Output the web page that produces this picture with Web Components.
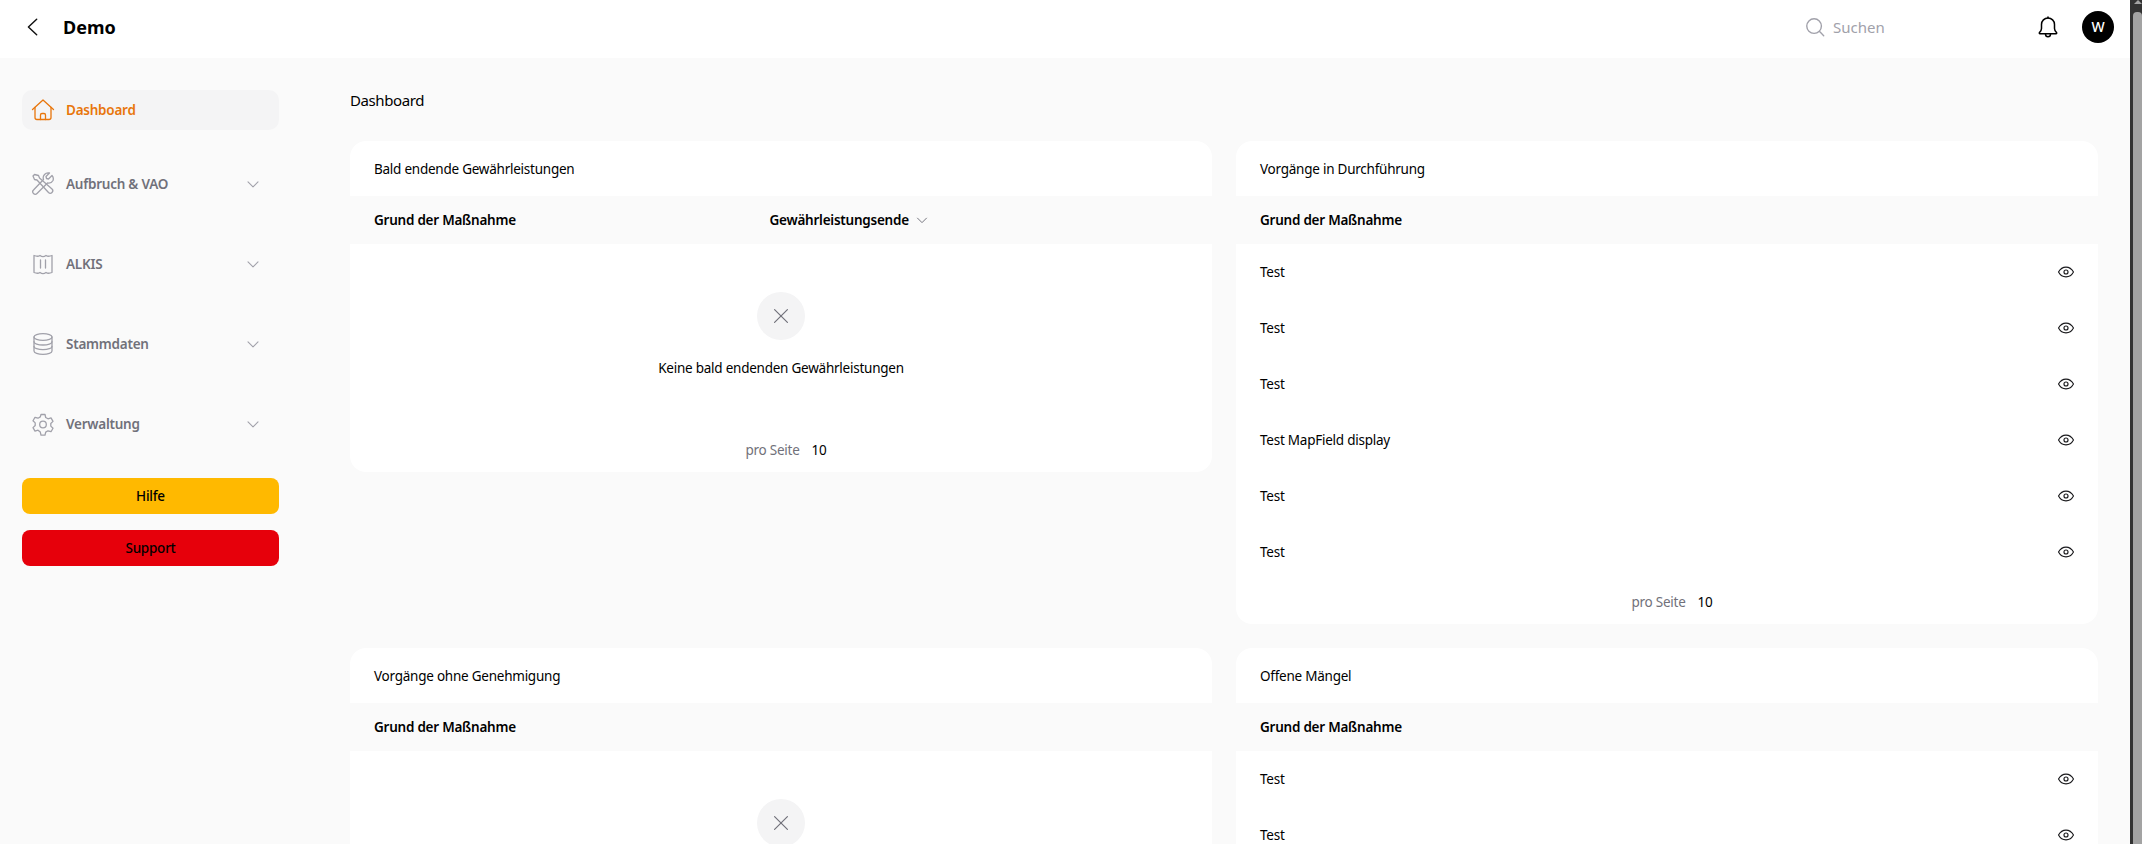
<!DOCTYPE html>
<html lang="de">
<head>
<meta charset="utf-8">
<title>Demo</title>
<style>
  html, body { margin: 0; height: 844px; overflow: hidden; }
  body {
    font-family: "Noto Sans", "Open Sans", sans-serif;
    font-size: 13.5px;
    letter-spacing: -0.24px;
    color: #000;
    background: #fafafa;
  }
</style>
</head>
<body>
<app-shell>
  <top-bar slot="top"></top-bar>
  <side-nav slot="side"></side-nav>
  <dash-board slot="main"></dash-board>
</app-shell>

<script>
const icons = {
  back: '<path d="M16 3.500L7 12l9 8.500"/>',
  home: '<path d="M1.500 11.500L12 2l10.500 9.500"/><path d="M4 9.500V19.500a2 2 0 0 0 2 2h12a2 2 0 0 0 2-2V9.500"/><path d="M9.500 21.500v-4.500a1.500 1.500 0 0 1 1.500-1.500h2a1.500 1.500 0 0 1 1.500 1.500v4.500"/>',
  tools: '<path d="M3.500 2.500L2 4l1.500 3.500 2.500.5L17.500 20.500a2.300 2.300 0 0 0 3.500-3.500L8.500 6 7.500 3.500z"/><path d="M21 3.500l-3.500 3.500-2-.5-.5-2L18.500 1a5 5 0 0 0-6 6.500L2.500 18a2.400 2.400 0 0 0 3.500 3.500L16.500 11a5 5 0 0 0 5.500-2.500 5 5 0 0 0-1-5z"/>',
  map: '<path d="M3 3.500c2.500 1 4.500 1 6 0 2 1.500 4 1.500 6 0 1.500 1 3.500 1 6 0v17c-2.500 1-4.500 1-6 0-2 1.500-4 1.500-6 0-1.500 1-3.500 1-6 0z"/><path d="M9.500 8v8M14.500 8v8"/>',
  db: '<ellipse cx="12" cy="5" rx="9" ry="3.300"/><path d="M3 5v14c0 1.800 4 3.300 9 3.300s9-1.500 9-3.300V5"/><path d="M3 9.700c0 1.800 4 3.300 9 3.300s9-1.500 9-3.300"/><path d="M3 14.400c0 1.800 4 3.300 9 3.300s9-1.500 9-3.300"/>',
  gear: '<path d="M10 2.500h4l.7 3 2.300 1.300 3-.9 2 3.500-2.200 2.100v2.600l2.200 2.100-2 3.500-3-.9-2.300 1.300-.7 3h-4l-.7-3L7 18.200l-3 .9-2-3.500 2.200-2.100v-2.600L2 8.800l2-3.500 3 .9 2.300-1.300z"/><circle cx="12" cy="12.500" r="3.300"/>',
  chevron: '<path d="M6 9.500l6 6 6-6"/>',
  search: '<circle cx="11" cy="11" r="8"/><path d="M17 17l4.500 4.500"/>',
  bell: '<path d="M12 3a6.500 6.500 0 0 0-6.500 6.500v4c0 2-1 3-2 4-.5.500-.2 1.300.5 1.300h16c.7 0 1-.8.500-1.300-1-1-2-2-2-4v-4A6.500 6.500 0 0 0 12 3z"/><path d="M9.500 19c0 1.700 1 2.800 2.500 2.800s2.500-1.100 2.500-2.800"/><path d="M12 3V2"/>',
  eye: '<path d="M2 12c2.500-4.500 6-6.500 10-6.500s7.500 2 10 6.500c-2.500 4.500-6 6.500-10 6.500S4.500 16.500 2 12z"/><circle cx="12" cy="12" r="2.700"/>',
  close: '<path d="M5 5l14 14M19 5L5 19"/>'
};

class UiIcon extends HTMLElement {
  connectedCallback() {
    const size = this.getAttribute("size") || 24;
    const stroke = this.getAttribute("stroke") || 1.5;
    this.attachShadow({ mode: "open" });
    this.shadowRoot.innerHTML = `
    <style>
      :host { display: inline-flex; flex-shrink: 0; }
      svg { display: block; fill: none; stroke: currentColor; stroke-linecap: round; stroke-linejoin: round; }
    </style>
    <svg width="${size}" height="${size}" viewBox="0 0 24 24" stroke-width="${stroke}">${icons[this.getAttribute("name")]}</svg>
    `;
  }
}

class AppShell extends HTMLElement {
  constructor() {
    super();
    this.attachShadow({ mode: "open" });
    this.shadowRoot.innerHTML = `
    <style>
      :host { display: flex; height: 844px; overflow: hidden; }
      .page { flex: 1; min-width: 0; display: flex; flex-direction: column; }
      .body { flex: 1; min-height: 0; display: flex; overflow: hidden; }
      .scrollbar {
        width: 12px;
        box-sizing: border-box;
        background: #333;
        padding-left: 3px;
        display: flex;
        flex-direction: column;
        flex-shrink: 0;
      }
      .arrow {
        height: 12px;
        flex-shrink: 0;
        display: flex;
        justify-content: center;
      }
      .arrow::before {
        content: "";
        border-left: 4px solid transparent;
        border-right: 4px solid transparent;
        border-bottom: 4px solid #a3a3a3;
        height: 0;
      }
      .thumb { flex: 1; background: #a3a3a3; border-radius: 4px 4px 0 0; }
    </style>
    <div class="page">
      <slot name="top"></slot>
      <div class="body">
        <slot name="side"></slot>
        <slot name="main"></slot>
      </div>
    </div>
    <div class="scrollbar"><div class="arrow"></div><div class="thumb"></div></div>
    `;
  }
}

class TopBar extends HTMLElement {
  constructor() {
    super();
    this.attachShadow({ mode: "open" });
    this.shadowRoot.innerHTML = `
    <style>
      :host {
        display: flex;
        align-items: center;
        height: 58px;
        box-sizing: border-box;
        flex-shrink: 0;
        background: #fff;
        padding: 0 16px 5px 22px;
        letter-spacing: 0;
      }
      .back { color: #111; margin-right: 19px; display: flex; }
      .title { font-size: 18px; font-weight: 700; flex: 1; }
      .search { display: flex; align-items: center; gap: 7px; width: 232px; color: #a1a1aa; }
      .search span { font-size: 15px; }
      .bell { display: flex; margin-right: 22px; }
      .avatar {
        width: 32px; height: 32px; border-radius: 50%;
        background: #000; color: #fff;
        display: flex; align-items: center; justify-content: center;
        font-size: 14px; font-weight: 500;
      }
    </style>
    <span class="back"><ui-icon name="back" size="22" stroke="1.6"></ui-icon></span>
    <span class="title">Demo</span>
    <div class="search"><ui-icon name="search" size="22" stroke="1.5"></ui-icon><span>Suchen</span></div>
    <span class="bell"><ui-icon name="bell" size="24" stroke="1.5"></ui-icon></span>
    <div class="avatar">W</div>
    `;
  }
}

class NavItem extends HTMLElement {
  constructor() {
    super();
    this.attachShadow({ mode: "open" });
    const active = this.hasAttribute("active");
    this.shadowRoot.innerHTML = `
    <style>
      :host {
        display: flex;
        align-items: center;
        height: 40px;
        padding: 0 16px 0 9px;
        gap: 11px;
        border-radius: 10px;
        color: #71717a;
        font-weight: 600;
      }
      :host([active]) { background: #f4f4f5; color: #e8760c; margin-bottom: -6px; }
      .ic { color: #a1a1aa; display: flex; }
      :host([active]) .ic { color: #e8760c; }
      .label { flex: 1; }
      .chev { color: #a1a1aa; display: flex; }
    </style>
    <span class="ic"><ui-icon name="${this.getAttribute("icon")}" size="24" stroke="1.3"></ui-icon></span>
    <span class="label"><slot></slot></span>
    ${active ? "" : '<span class="chev"><ui-icon name="chevron" size="20" stroke="1.3"></ui-icon></span>'}
    `;
  }
}

class SideButton extends HTMLElement {
  constructor() {
    super();
    this.attachShadow({ mode: "open" });
    this.shadowRoot.innerHTML = `
    <style>
      :host {
        display: flex;
        align-items: center;
        justify-content: center;
        height: 36px;
        border-radius: 8px;
        font-weight: 500;
        color: #000;
        background: var(--btn);
      }
    </style>
    <slot></slot>
    `;
  }
}

class SideNav extends HTMLElement {
  constructor() {
    super();
    this.attachShadow({ mode: "open" });
    this.shadowRoot.innerHTML = `
    <style>
      :host {
        display: flex;
        flex-direction: column;
        width: 257px;
        flex-shrink: 0;
        padding: 32px 0 0 22px;
        margin-right: 71px;
      }
      nav { display: flex; flex-direction: column; gap: 40px; }
      .buttons { display: flex; flex-direction: column; gap: 16px; margin-top: 34px; }
    </style>
    <nav>
      <nav-item icon="home" active>Dashboard</nav-item>
      <nav-item icon="tools">Aufbruch &amp; VAO</nav-item>
      <nav-item icon="map">ALKIS</nav-item>
      <nav-item icon="db">Stammdaten</nav-item>
      <nav-item icon="gear">Verwaltung</nav-item>
    </nav>
    <div class="buttons">
      <side-button style="--btn:#ffb900">Hilfe</side-button>
      <side-button style="--btn:#e6000b">Support</side-button>
    </div>
    `;
  }
}

class DashCard extends HTMLElement {
  constructor() {
    super();
    this.attachShadow({ mode: "open" });
    const pager = this.hasAttribute("pager")
      ? '<div class="pager"><span>pro Seite</span><b>10</b></div>'
      : "";
    this.shadowRoot.innerHTML = `
    <style>
      :host {
        display: block;
        background: #fff;
        border-radius: 16px;
        overflow: hidden;
      }
      .title { height: 55px; display: flex; align-items: center; padding: 0 24px; }
      .head {
        height: 48px;
        display: grid;
        grid-template-columns: var(--cols, 1fr);
        align-items: center;
        padding: 0 24px;
        background: #fafafa;
        font-weight: 600;
      }
      .pager {
        height: 44px;
        display: flex;
        align-items: center;
        justify-content: center;
        gap: 12px;
        padding-left: 10px;
        color: #71717a;
      }
      .pager b { font-weight: 400; color: #000; }
    </style>
    <div class="title">${this.getAttribute("heading")}</div>
    <div class="head"><slot name="head"></slot></div>
    <slot></slot>
    ${pager}
    `;
  }
}

class CardRow extends HTMLElement {
  constructor() {
    super();
    this.attachShadow({ mode: "open" });
    this.shadowRoot.innerHTML = `
    <style>
      :host {
        display: flex;
        align-items: center;
        justify-content: space-between;
        height: 56px;
        padding: 0 23px 0 24px;
      }
      .eye { color: #18181b; display: flex; }
    </style>
    <slot></slot>
    <span class="eye"><ui-icon name="eye" size="18" stroke="1.5"></ui-icon></span>
    `;
  }
}

class EmptyState extends HTMLElement {
  constructor() {
    super();
    this.attachShadow({ mode: "open" });
    this.shadowRoot.innerHTML = `
    <style>
      :host {
        display: flex;
        flex-direction: column;
        align-items: center;
        height: 184px;
        box-sizing: border-box;
        padding-top: 48px;
      }
      .circle {
        width: 48px; height: 48px; border-radius: 50%;
        background: #f4f4f5; color: #71717a;
        display: flex; align-items: center; justify-content: center;
      }
      .text { margin-top: 18px; line-height: 20px; }
    </style>
    <div class="circle"><ui-icon name="close" size="22" stroke="1.3"></ui-icon></div>
    <div class="text"><slot></slot></div>
    `;
  }
}

class DashBoard extends HTMLElement {
  constructor() {
    super();
    this.attachShadow({ mode: "open" });
    this.shadowRoot.innerHTML = `
    <style>
      :host { display: block; flex: 1; min-width: 0; padding: 0 32px 0 0; }
      h1 { font-size: 15px; letter-spacing: -0.4px; font-weight: 400; margin: 0; height: 83px; display: flex; align-items: center; }
      .grid { display: grid; grid-template-columns: 1fr 1fr; gap: 24px; align-items: start; }
      .sort { display: inline-flex; align-items: center; gap: 4px; }
      .sort ui-icon { color: #71717a; }
    </style>
    <h1>Dashboard</h1>
    <div class="grid">
      <dash-card heading="Bald endende Gewährleistungen" pager style="--cols: 395.500px 1fr">
        <span slot="head">Grund der Maßnahme</span>
        <span slot="head" class="sort">Gewährleistungsende <ui-icon name="chevron" size="18" stroke="1.3"></ui-icon></span>
        <empty-state>Keine bald endenden Gewährleistungen</empty-state>
      </dash-card>
      <dash-card heading="Vorgänge in Durchführung" pager>
        <span slot="head">Grund der Maßnahme</span>
        <card-row>Test</card-row>
        <card-row>Test</card-row>
        <card-row>Test</card-row>
        <card-row>Test MapField display</card-row>
        <card-row>Test</card-row>
        <card-row>Test</card-row>
      </dash-card>
      <dash-card heading="Vorgänge ohne Genehmigung">
        <span slot="head">Grund der Maßnahme</span>
        <empty-state></empty-state>
      </dash-card>
      <dash-card heading="Offene Mängel">
        <span slot="head">Grund der Maßnahme</span>
        <card-row>Test</card-row>
        <card-row>Test</card-row>
      </dash-card>
    </div>
    `;
  }
}

customElements.define("ui-icon", UiIcon);
customElements.define("app-shell", AppShell);
customElements.define("top-bar", TopBar);
customElements.define("nav-item", NavItem);
customElements.define("side-button", SideButton);
customElements.define("side-nav", SideNav);
customElements.define("dash-card", DashCard);
customElements.define("card-row", CardRow);
customElements.define("empty-state", EmptyState);
customElements.define("dash-board", DashBoard);
</script>
</body>
</html>
